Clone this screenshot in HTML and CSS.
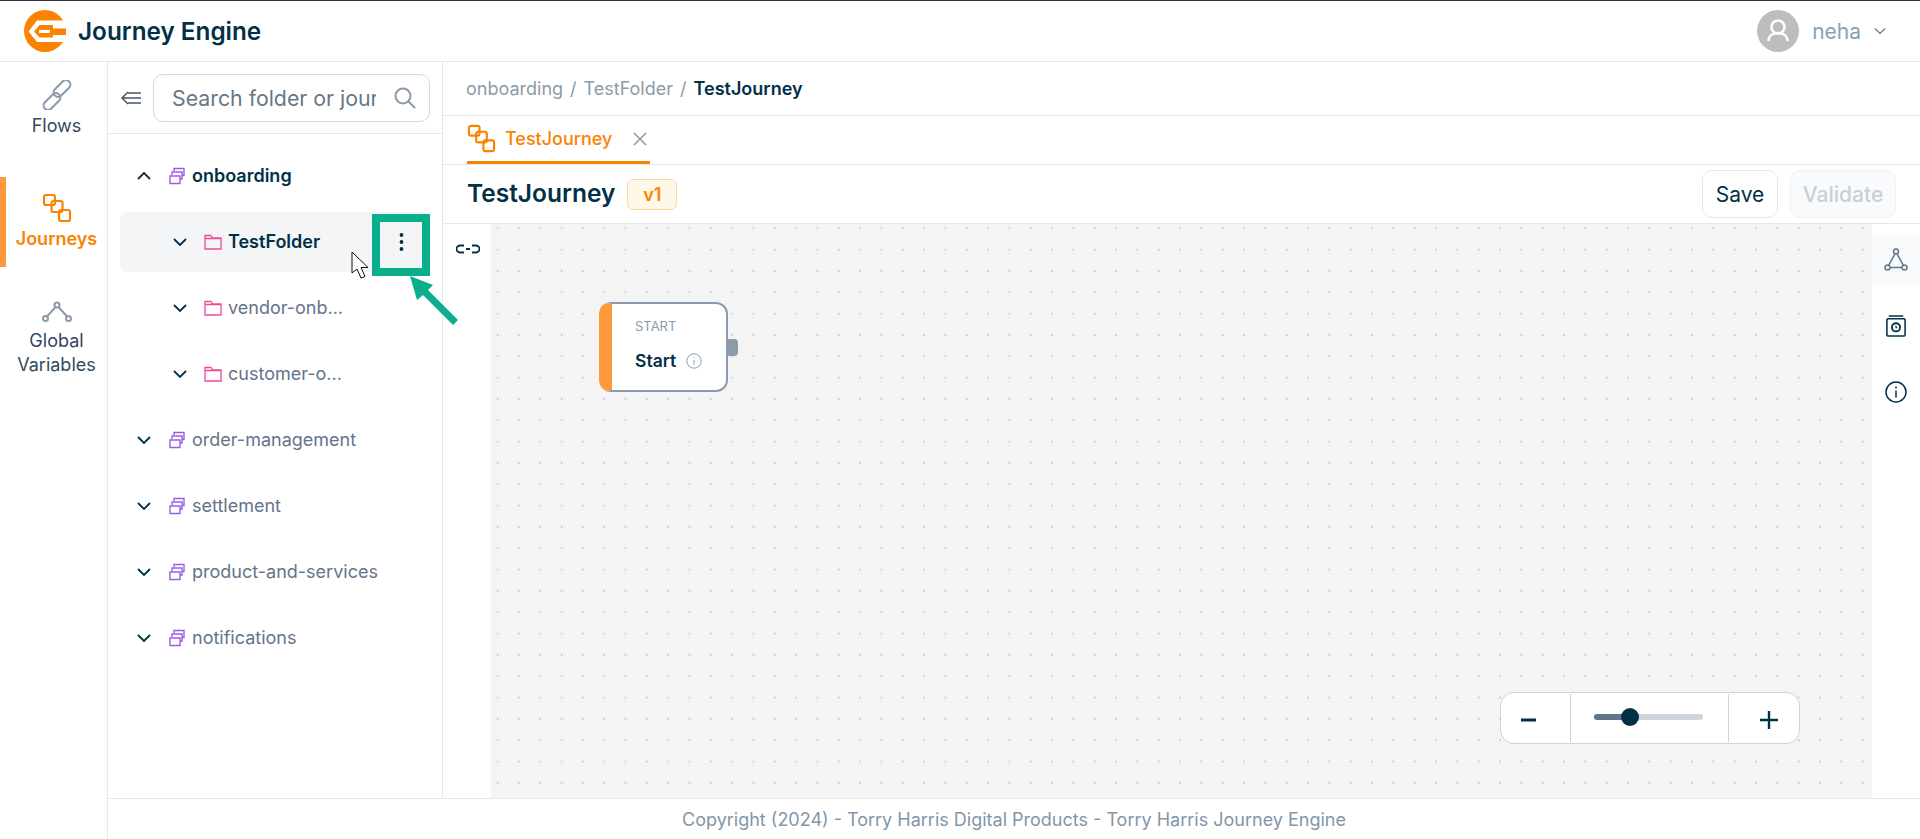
FILE: index.html
```html
<!DOCTYPE html>
<html lang="en">
<head>
    <meta charset="UTF-8">
    <title>Journey Engine</title>
    <link rel="stylesheet" href="styles.css">
</head>
<body>

    <!-- Top bar -->
    <header class="topbar">
        <div class="brand">
            <svg class="logo" viewBox="0 0 42 42">
                <circle cx="21" cy="21" r="21" fill="#f98404"/>
                <path d="M42 10.500H13L4.500 21.500 13 32H42z" fill="#fff"/>
                <path d="M29 15H15.500L10 21.500 15.500 27.500H29V25H42V18.500H29z" fill="#f98404"/>
                <path d="M15 20h11v3H15z" fill="#fff"/>
            </svg>
            <span class="brand-name">Journey Engine</span>
        </div>
        <div class="user">
            <span class="avatar">
                <svg viewBox="0 0 42 42" width="42" height="42" fill="none" stroke="#fff" stroke-width="2.500">
                    <circle cx="21" cy="17" r="6.500"/>
                    <path d="M11.500 31c0-5 4-8 9.500-8s9.500 3 9.500 8"/>
                </svg>
            </span>
            <span class="user-name">neha</span>
            <svg class="user-caret" viewBox="0 0 12 8" width="12" height="8" fill="none" stroke="#64748b" stroke-width="1.200"><path d="M1 1.500l5 5 5-5"/></svg>
        </div>
    </header>

    <div class="app">
        <!-- Left rail -->
        <nav class="rail">
            <a class="rail-item flows">
                <svg viewBox="0 0 30 30" width="30" height="30" fill="none" stroke="#8a9bab" stroke-width="2">
                    <rect x="10" y="4" width="20" height="9" rx="4.500" transform="rotate(-45 20 8.500)"/>
                    <rect x="0" y="17" width="20" height="9" rx="4.500" transform="rotate(-45 10 21.500)"/>
                </svg>
                <span>Flows</span>
            </a>
            <a class="rail-item active">
                <svg viewBox="0 0 30 30" width="30" height="30" fill="none" stroke="#f98404" stroke-width="2.200">
                    <rect x="2" y="2" width="11" height="10" rx="2"/>
                    <rect x="9.500" y="8" width="11" height="11" rx="2"/>
                    <rect x="17" y="17" width="11" height="11" rx="2"/>
                </svg>
                <span>Journeys</span>
            </a>
            <a class="rail-item globals">
                <svg viewBox="0 0 30 24" width="30" height="24" fill="none" stroke="#8a9bab" stroke-width="2">
                    <circle cx="15" cy="4" r="2.500"/>
                    <circle cx="3.500" cy="17.500" r="2.500"/>
                    <circle cx="26.500" cy="17.500" r="2.500"/>
                    <path d="M13.500 6L5 15.500M16.500 6L25 15.500"/>
                </svg>
                <span>Global<br>Variables</span>
            </a>
        </nav>

        <div class="right">
            <div class="main">
                <!-- Folder tree -->
                <aside class="explorer">
                    <div class="explorer-head">
                        <svg class="collapse-icon" viewBox="0 0 20 14" width="20" height="14" fill="none" stroke="#475569" stroke-width="1.500"><path d="M7 1L1 7l6 6M1 7h19M7 2h13M7 12h13"/></svg>
                        <div class="search">
                            <input type="text" placeholder="Search folder or journey">
                            <svg viewBox="0 0 22 22" width="22" height="22" fill="none" stroke="#8a9bab" stroke-width="2"><circle cx="9" cy="9" r="7.500"/><path d="M14.500 14.500L21 21"/></svg>
                        </div>
                    </div>
                    <ul class="tree">
                        <li class="tree-row open">
                            <svg class="chev" viewBox="0 0 14 8"><path d="M1 7l6-6 6 6"/></svg>
                            <svg class="stack" viewBox="0 0 16 18"><path d="M5 4V1.500h10V8.500h-2.500M3 8V5h10v7h-2M1 9h10v7.500H1z"/></svg>
                            <span>onboarding</span>
                        </li>
                        <li class="tree-row sub hover">
                            <svg class="chev" viewBox="0 0 14 8"><path d="M1 1l6 6 6-6"/></svg>
                            <svg class="folder" viewBox="0 0 18 16"><path d="M1 14.500V1.500h6l1.500 2.500H17V15H1zM1 4.500h16"/></svg>
                            <span>TestFolder</span>
                        </li>
                        <li class="tree-row sub">
                            <svg class="chev" viewBox="0 0 14 8"><path d="M1 1l6 6 6-6"/></svg>
                            <svg class="folder" viewBox="0 0 18 16"><path d="M1 14.500V1.500h6l1.500 2.500H17V15H1zM1 4.500h16"/></svg>
                            <span>vendor-onb...</span>
                        </li>
                        <li class="tree-row sub">
                            <svg class="chev" viewBox="0 0 14 8"><path d="M1 1l6 6 6-6"/></svg>
                            <svg class="folder" viewBox="0 0 18 16"><path d="M1 14.500V1.500h6l1.500 2.500H17V15H1zM1 4.500h16"/></svg>
                            <span>customer-o...</span>
                        </li>
                        <li class="tree-row">
                            <svg class="chev" viewBox="0 0 14 8"><path d="M1 1l6 6 6-6"/></svg>
                            <svg class="stack" viewBox="0 0 16 18"><path d="M5 4V1.500h10V8.500h-2.500M3 8V5h10v7h-2M1 9h10v7.500H1z"/></svg>
                            <span>order-management</span>
                        </li>
                        <li class="tree-row">
                            <svg class="chev" viewBox="0 0 14 8"><path d="M1 1l6 6 6-6"/></svg>
                            <svg class="stack" viewBox="0 0 16 18"><path d="M5 4V1.500h10V8.500h-2.500M3 8V5h10v7h-2M1 9h10v7.500H1z"/></svg>
                            <span>settlement</span>
                        </li>
                        <li class="tree-row">
                            <svg class="chev" viewBox="0 0 14 8"><path d="M1 1l6 6 6-6"/></svg>
                            <svg class="stack" viewBox="0 0 16 18"><path d="M5 4V1.500h10V8.500h-2.500M3 8V5h10v7h-2M1 9h10v7.500H1z"/></svg>
                            <span>product-and-services</span>
                        </li>
                        <li class="tree-row">
                            <svg class="chev" viewBox="0 0 14 8"><path d="M1 1l6 6 6-6"/></svg>
                            <svg class="stack" viewBox="0 0 16 18"><path d="M5 4V1.500h10V8.500h-2.500M3 8V5h10v7h-2M1 9h10v7.500H1z"/></svg>
                            <span>notifications</span>
                        </li>
                    </ul>
                </aside>

                <!-- Journey workspace -->
                <section class="workspace">
                    <div class="crumbs">
                        <span>onboarding</span><i>/</i><span>TestFolder</span><i>/</i><b>TestJourney</b>
                    </div>
                    <div class="tabs">
                        <div class="tab">
                            <svg viewBox="0 0 30 30" width="29" height="29" fill="none" stroke="#f98404" stroke-width="2.200">
                                <rect x="2" y="2" width="11" height="10" rx="2"/>
                                <rect x="9.500" y="8" width="11" height="11" rx="2"/>
                                <rect x="17" y="17" width="11" height="11" rx="2"/>
                            </svg>
                            <span>TestJourney</span>
                            <svg class="tab-close" viewBox="0 0 14 14" width="14" height="14" fill="none" stroke="#8a9bab" stroke-width="1.500"><path d="M1 1l12 12M13 1L1 13"/></svg>
                        </div>
                    </div>
                    <div class="title-row">
                        <h1>TestJourney</h1>
                        <span class="badge">v1</span>
                        <div class="title-actions">
                            <button class="btn">Save</button>
                            <button class="btn disabled">Validate</button>
                        </div>
                    </div>
                    <div class="stage">
                        <div class="tool-left">
                            <svg viewBox="0 0 24 10" width="24" height="10" fill="none" stroke="#023047" stroke-width="1.800"><path d="M8 1.500H4a3.500 3.500 0 0 0 0 7h4M16 1.500h4a3.500 3.500 0 0 1 0 7h-4M10 5h4"/></svg>
                        </div>
                        <div class="canvas">
                            <div class="node">
                                <div class="node-body">
                                    <span class="node-type">START</span>
                                    <span class="node-name">Start
                                        <svg viewBox="0 0 16 16" width="16" height="16" fill="none" stroke="#8a9bab" stroke-width="1"><circle cx="8" cy="8" r="7.200"/><path d="M8 7v4.500M8 4.200v1.300"/></svg>
                                    </span>
                                </div>
                                <span class="node-port"></span>
                            </div>
                            <div class="zoom-ctl">
                                <span class="zoom-btn"><svg viewBox="0 0 15 4" width="15" height="4"><rect width="15" height="3" y="0.500" fill="#023047"/></svg></span>
                                <span class="zoom-track"><span class="zoom-fill"></span><span class="zoom-thumb"></span></span>
                                <span class="zoom-btn"><svg viewBox="0 0 18 18" width="18" height="18" fill="none" stroke="#023047" stroke-width="2.400"><path d="M0 9h18M9 0v18"/></svg></span>
                            </div>
                        </div>
                        <div class="tool-right">
                            <span class="tool-btn selected">
                                <svg viewBox="0 0 24 24" width="24" height="24" fill="none" stroke="#64788a" stroke-width="1.500"><circle cx="12" cy="3.500" r="2.500"/><circle cx="3.500" cy="19.500" r="2.500"/><circle cx="20.500" cy="19.500" r="2.500"/><path d="M11 5.800L4.600 17.300M13 5.800l6.400 11.500M6 19.500h12"/></svg>
                            </span>
                            <span class="tool-btn">
                                <svg viewBox="0 0 22 24" width="20" height="22" fill="none" stroke="#023047" stroke-width="1.700"><path d="M3 1h16M2 4h18a1 1 0 0 1 1 1v17a1 1 0 0 1-1 1H2a1 1 0 0 1-1-1V5a1 1 0 0 1 1-1z"/><circle cx="11" cy="13.500" r="4.500" stroke-width="2"/><path d="M11 11.500v2.500h1.500" stroke-width="1.200"/></svg>
                            </span>
                            <span class="tool-btn">
                                <svg viewBox="0 0 22 22" width="22" height="22" fill="none" stroke="#023047" stroke-width="1.500"><circle cx="11" cy="11" r="10"/><path d="M11 9.500v7M11 5.500v2"/></svg>
                            </span>
                        </div>
                    </div>
                </section>
            </div>
            <footer class="footer">Copyright (2024) - Torry Harris Digital Products - Torry Harris Journey Engine</footer>
        </div>
    </div>

    <!-- Annotation drawn over the screenshot -->
    <div class="callout">
        <svg class="kebab" viewBox="0 0 4 18" width="5" height="18"><circle cx="2" cy="2" r="1.900"/><circle cx="2" cy="9" r="1.900"/><circle cx="2" cy="16" r="1.900"/></svg>
    </div>
    <svg class="callout-arrow" viewBox="0 0 50 50" width="50" height="50"><path d="M0 0L23 9 18 14 48 44 43 49 13 19 7 24z" fill="#0aae8c"/></svg>
    <svg class="cursor" viewBox="0 0 20 30" width="20" height="30"><path d="M1 1v21l5-4 4 9 4-1.500-4-9h7z" fill="#fff" stroke="#111" stroke-width="1"/></svg>

</body>
</html>
```

FILE: styles.css
```css
* {
    box-sizing: border-box;
}
html, body {
    height: 100%;
}
body {
    margin: 0;
    height: 839px;
    overflow: hidden;
    display: flex;
    flex-direction: column;
    position: relative;
    font-family: Inter, "Noto Sans", sans-serif;
    font-size: 18px;
    color: #023047;
    background-color: #fff;
}
.topbar {
    height: 62px;
    flex-shrink: 0;
    display: flex;
    justify-content: space-between;
    align-items: center;
    padding: 0 34px 0 24px;
    border-top: 1px solid #2f2f45;
    border-bottom: 1px solid #e5e7eb;
}
.brand {
    display: flex;
    align-items: center;
    gap: 12px;
}
.logo {
    width: 42px;
    height: 42px;
}
.brand-name {
    font-size: 24.300px;
    font-weight: 600;
}
.user {
    display: flex;
    align-items: center;
}
.avatar {
    width: 42px;
    height: 42px;
    border-radius: 50%;
    background-color: #bdbdbd;
    display: block;
}
.avatar svg {
    display: block;
}
.user-name {
    margin-left: 13px;
    font-size: 21px;
    color: #8aa1b5;
}
.user-caret {
    margin-left: 13px;
}
.app {
    flex: 1;
    display: flex;
    min-height: 0;
}
.rail {
    width: 108px;
    flex-shrink: 0;
    border-right: 1px solid #e5e7eb;
}
.rail-item {
    display: flex;
    flex-direction: column;
    align-items: center;
    text-align: center;
    font-size: 18px;
    line-height: 24px;
    gap: 4px;
    border-left: 6px solid transparent;
    color: #344860;
}
.rail-item svg {
    display: block;
}
.rail-item.flows {
    height: 115px;
    padding-top: 18px;
}
.rail-item.active {
    height: 90px;
    padding-top: 16px;
    border-left-color: #ff9a3c;
    color: #f98404;
    font-weight: 600;
}
.rail-item.globals {
    padding-top: 34px;
}
.right {
    flex: 1;
    min-width: 0;
    display: flex;
    flex-direction: column;
}
.main {
    flex: 1;
    min-height: 0;
    display: flex;
}
.explorer {
    width: 335px;
    flex-shrink: 0;
    border-right: 1px solid #e5e7eb;
}
.explorer-head {
    height: 72px;
    display: flex;
    align-items: center;
    padding: 0 12px 0 13px;
    gap: 12px;
    border-bottom: 1px solid #e5e7eb;
}
.collapse-icon {
    flex-shrink: 0;
}
.search {
    flex: 1;
    min-width: 0;
    height: 48px;
    display: flex;
    align-items: center;
    padding: 0 13px 0 18px;
    border: 1px solid #d4d8e0;
    border-radius: 10px;
}
.search svg {
    flex-shrink: 0;
}
.search input {
    flex: 1;
    min-width: 0;
    border: none;
    outline: none;
    padding: 0;
    margin-right: 18px;
    font-family: inherit;
    font-size: 21.300px;
}
.search input::placeholder {
    color: #667788;
}
.tree {
    list-style: none;
    margin: 0;
    padding: 12px 12px 0;
}
.tree-row {
    height: 60px;
    margin-bottom: 6px;
    display: flex;
    align-items: center;
    padding-left: 17px;
    color: #64748b;
}
.tree-row span {
    margin-bottom: 2px;
}
.tree-row.sub {
    padding-left: 53px;
}
.tree-row.open, .tree-row.hover {
    color: #023047;
    font-weight: 600;
}
.tree-row.hover {
    background-color: #f4f5f6;
    border-radius: 8px;
}
.chev {
    width: 14px;
    height: 8px;
    fill: none;
    stroke: #023047;
    stroke-width: 1.800;
}
.stack {
    width: 16px;
    height: 18px;
    margin-left: 18px;
    margin-right: 7px;
    fill: none;
    stroke: #9b5de5;
    stroke-width: 1.400;
}
.folder {
    width: 18px;
    height: 16px;
    margin-left: 17px;
    margin-right: 6px;
    fill: none;
    stroke: #f0489e;
    stroke-width: 1.300;
}
.workspace {
    flex: 1;
    min-width: 0;
    display: flex;
    flex-direction: column;
}
.crumbs {
    height: 54px;
    flex-shrink: 0;
    display: flex;
    align-items: center;
    padding-left: 23px;
    border-bottom: 1px solid #e5e7eb;
    color: #8a9bab;
}
.crumbs i {
    font-style: normal;
    margin: 0 7px;
}
.crumbs b {
    color: #023047;
    font-weight: 600;
}
.tabs {
    height: 49px;
    flex-shrink: 0;
    padding-left: 24px;
    border-bottom: 1px solid #e5e7eb;
}
.tab {
    width: 183px;
    height: 48px;
    display: flex;
    align-items: center;
    border-bottom: 3px solid #f98404;
    color: #f98404;
    font-weight: 500;
}
.tab span {
    margin-left: 9px;
}
.tab-close {
    margin-left: 21px;
}
.title-row {
    height: 59px;
    flex-shrink: 0;
    display: flex;
    align-items: center;
    padding: 0 24px;
    border-bottom: 1px solid #e5e7eb;
}
h1 {
    margin: 0 0 2px;
    font-size: 24.500px;
    font-weight: 600;
}
.badge {
    margin-left: 12px;
    height: 31px;
    width: 50px;
    display: flex;
    align-items: center;
    justify-content: center;
    background-color: #fff7e8;
    border: 1px solid #fdd9a0;
    border-radius: 6px;
    color: #f98404;
    font-weight: 600;
}
.title-actions {
    margin-left: auto;
    display: flex;
    gap: 12px;
}
.btn {
    width: 76px;
    height: 48px;
    padding: 0;
    font-family: inherit;
    font-size: 21px;
    background-color: #fff;
    border: 1px solid #e5e7eb;
    border-radius: 10px;
    color: #023047;
}
.btn.disabled {
    width: 106px;
    background-color: #f9fafb;
    border-color: #f0f1f3;
    color: #c7d0da;
    font-weight: 500;
}
.stage {
    flex: 1;
    min-height: 0;
    display: flex;
}
.tool-left {
    width: 48px;
    flex-shrink: 0;
    padding: 20px 0 0 13px;
}
.tool-left svg {
    display: block;
}
.canvas {
    flex: 1;
    min-width: 0;
    position: relative;
    background-color: #f4f4f5;
    background-image: radial-gradient(circle, #d0d0d3 1px, transparent 1.400px);
    background-size: 21.333px 21.333px;
    background-position: -4px -6.300px;
}
.tool-right {
    width: 48px;
    flex-shrink: 0;
    padding-top: 12px;
    display: flex;
    flex-direction: column;
    gap: 18px;
}
.tool-btn {
    height: 48px;
    display: flex;
    align-items: center;
    justify-content: center;
}
.tool-btn.selected {
    background-color: #f9fafb;
}
.node {
    position: absolute;
    left: 108px;
    top: 78px;
    width: 129px;
    height: 90px;
    background-color: #fff;
    border: 2px solid #8a9bab;
    border-left: 13px solid #ff9a3c;
    border-radius: 12px;
}
.node-body {
    display: flex;
    flex-direction: column;
    padding: 14px 0 0 23px;
}
.node-type {
    font-size: 13px;
    color: #8a9bab;
}
.node-name {
    margin-top: 16px;
    font-size: 17.500px;
    font-weight: 600;
    display: flex;
    align-items: center;
    gap: 10px;
}
.node-port {
    position: absolute;
    right: -12px;
    top: 35px;
    width: 10px;
    height: 17px;
    background-color: #8a9bab;
    border-radius: 0 4px 4px 0;
}
.zoom-ctl {
    position: absolute;
    left: 1009px;
    top: 468px;
    width: 300px;
    height: 52px;
    display: flex;
    align-items: stretch;
    background-color: #fff;
    border: 1px solid #d0d2da;
    border-radius: 14px;
}
.zoom-btn {
    width: 69px;
    display: flex;
    align-items: center;
    justify-content: center;
    padding: 4px 14px 0 0;
}
.zoom-btn:last-child {
    width: 70px;
    padding: 4px 0 0 10px;
}
.zoom-track {
    flex: 1;
    position: relative;
    border-left: 1px solid #d0d2da;
    border-right: 1px solid #d0d2da;
    margin: 1px 0;
}
.zoom-track::before {
    content: "";
    position: absolute;
    left: 23px;
    right: 25px;
    top: 20px;
    height: 6px;
    background-color: #d0d5dd;
    border-radius: 3px;
}
.zoom-fill {
    position: absolute;
    left: 23px;
    top: 20px;
    width: 36px;
    height: 6px;
    background-color: #64748b;
    border-radius: 3px;
}
.zoom-thumb {
    position: absolute;
    left: 50px;
    top: 14px;
    width: 18px;
    height: 18px;
    background-color: #023047;
    border-radius: 50%;
}
.footer {
    height: 41px;
    flex-shrink: 0;
    display: flex;
    align-items: center;
    justify-content: center;
    border-top: 1px solid #e5e7eb;
    color: #8396a8;
}
.callout {
    position: absolute;
    left: 372px;
    top: 214px;
    width: 58px;
    height: 62px;
    border: 8px solid #0aae8c;
    display: flex;
    align-items: center;
    justify-content: center;
    padding-bottom: 6px;
}
.kebab {
    fill: #023047;
}
.callout-arrow {
    position: absolute;
    left: 410px;
    top: 276px;
}
.cursor {
    position: absolute;
    left: 351px;
    top: 251px;
}
```
